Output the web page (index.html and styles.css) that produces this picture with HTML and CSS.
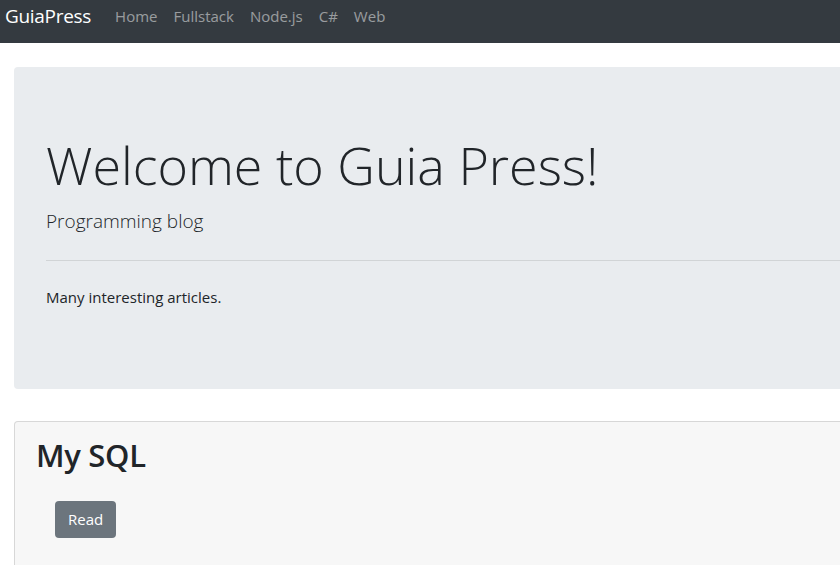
FILE: index.html
```html
<!DOCTYPE html>
<html lang="en">
<head>
<meta charset="utf-8">
<title>GuiaPress</title>
<link rel="stylesheet" href="styles.css">
</head>
<body>
<nav class="navbar">
  <a class="brand" href="#">GuiaPress</a>
  <ul class="nav">
    <li><a href="#">Home</a></li>
    <li><a href="#">Fullstack</a></li>
    <li><a href="#">Node.js</a></li>
    <li><a href="#">C#</a></li>
    <li><a href="#">Web</a></li>
  </ul>
</nav>
<main class="container">
  <section class="jumbotron">
    <h1 class="display">Welcome to Guia Press!</h1>
    <p class="lead">Programming blog</p>
    <hr class="divider">
    <p class="text">Many interesting articles.</p>
  </section>
  <article class="card">
    <h2 class="card-title">My SQL</h2>
    <div class="card-actions">
      <a class="btn" href="#">Read</a>
    </div>
  </article>
</main>
</body>
</html>
```
FILE: styles.css
```css
html, body {
  margin: 0;
  padding: 0;
}
body {
  font-family: "Open Sans", "Noto Sans", sans-serif;
  color: #212529;
  background: #fff;
  overflow: hidden;
  width: 840px;
  height: 565px;
}
a { text-decoration: none; }

.navbar {
  display: flex;
  align-items: center;
  height: 30px;
  padding: 1px 5px 12px;
  background: #343a40;
}
.brand {
  color: #fff;
  font-size: 19px;
  line-height: 30px;
  margin-right: 16px;
  letter-spacing: -0.3px;
}
.nav {
  display: flex;
  list-style: none;
  margin: 0;
  padding: 0;
}
.nav a {
  display: block;
  padding: 0 8px;
  font-size: 15px;
  line-height: 24px;
  color: rgba(255,255,255,.5);
}

.container {
  display: flex;
  flex-direction: column;
  height: 498px;
  margin-left: 14px;
  padding-top: 24px;
}
.jumbotron {
  background: #e9ecef;
  border-radius: 4px 0 0 4px;
  padding: 64px 0 64px 32px;
  margin-bottom: 32px;
}
.display {
  margin: 0 0 8px;
  font-size: 52px;
  font-weight: 300;
  line-height: 67px;
  white-space: nowrap;
}
.lead {
  margin: 0;
  font-size: 19px;
  font-weight: 300;
  line-height: 30px;
}
.divider {
  margin: 24px 0;
  border: 0;
  border-top: 1px solid rgba(0,0,0,.1);
}
.text {
  margin: 0 0 16px;
  font-size: 15px;
  line-height: 24px;
}
.card {
  flex: 1;
  background: #f7f7f7;
  border: 1px solid rgba(0,0,0,.125);
  border-right: 0;
  border-bottom: 0;
  border-radius: 4px 0 0 0;
  padding: 14px 21px 0;
}
.card-title {
  margin: 0 0 27px;
  font-size: 31px;
  font-weight: 600;
  line-height: 38px;
  letter-spacing: -0.3px;
}
.card-actions {
  padding-left: 19px;
}
.btn {
  display: inline-block;
  padding: 7px 13px;
  font-size: 15px;
  line-height: 23px;
  color: #fff;
  background: #6c757d;
  border-radius: 4px;
}
```
